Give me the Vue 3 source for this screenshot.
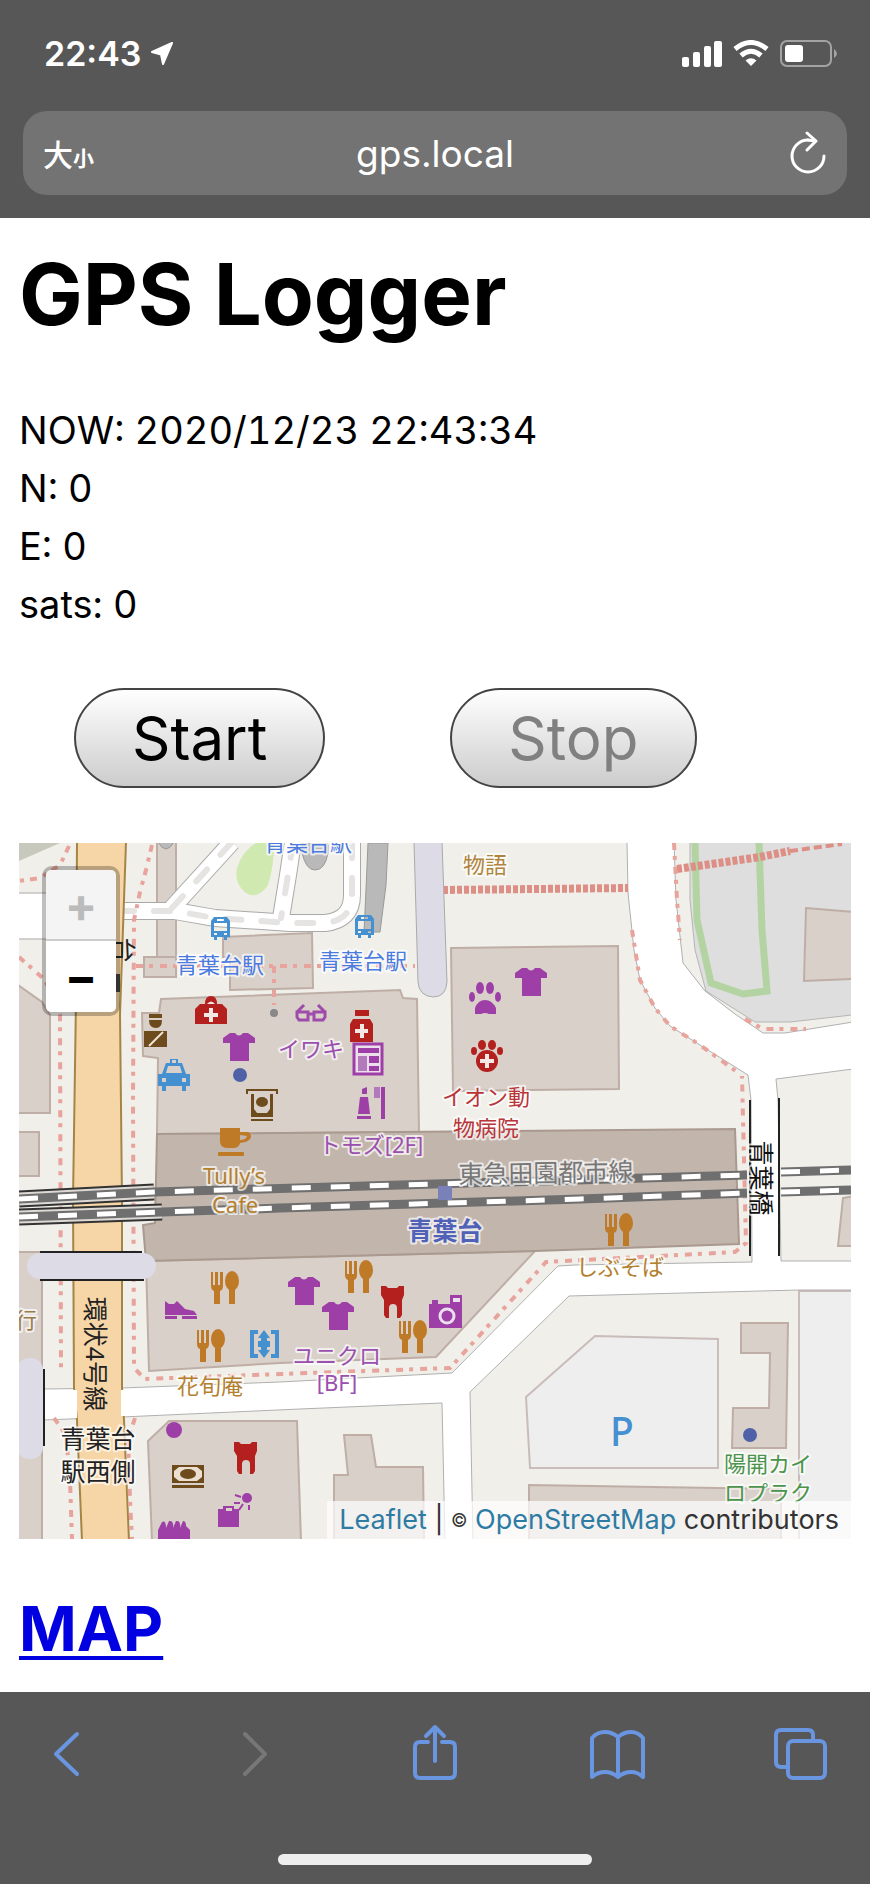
<template>
  <div class="phone">
    <header class="top-chrome">
      <div class="status-bar">
        <div class="clock">
          <span>22:43</span>
          <svg width="24" height="24" viewBox="0 0 24 24">
            <path d="M22 1 L2 10 L11 12.500 L13 22 Z" fill="#fff" stroke="#fff" stroke-width="2" stroke-linejoin="round" />
          </svg>
        </div>
        <svg width="156" height="28" viewBox="0 0 156 28">
          <g fill="#fff">
            <rect x="0" y="17" width="7" height="10" rx="2" />
            <rect x="11" y="12" width="7" height="15" rx="2" />
            <rect x="22" y="6" width="7" height="21" rx="2" />
            <rect x="32" y="1" width="8" height="26" rx="2" />
            <path d="M69 26 L63.500 20.500 Q69 16 74.500 20.500 Z" />
          </g>
          <g fill="none" stroke="#fff" stroke-width="5">
            <path d="M53 9 Q69 -4 85 9" />
            <path d="M59 15.500 Q69 7 79 15.500" />
          </g>
          <rect x="99" y="1" width="50" height="25" rx="6" fill="none" stroke="#a3a3a3" stroke-width="2" />
          <rect x="103" y="5" width="18" height="17" rx="3" fill="#fff" />
          <path d="M152 9 Q158 13.500 152 18 Z" fill="#a3a3a3" />
        </svg>
      </div>

      <div class="address-bar">
        <button type="button" class="text-size" aria-label="文字サイズ">
          <span class="big">大</span><span class="small">小</span>
        </button>
        <input v-model="address" class="address" type="text" aria-label="アドレス" />
        <button type="button" class="reload" aria-label="再読み込み">
          <svg width="38" height="44" viewBox="0 0 38 44">
            <path d="M19 9 A16 16 0 1 0 35 25" />
            <path d="M18 2 L27 10 L18 19" />
            <path d="M19 9 L26 10" />
          </svg>
        </button>
      </div>
    </header>

    <main class="page">
      <h1>GPS Logger</h1>

      <div class="readout">
        <div>NOW: {{ gps.now }}</div>
        <div>N: {{ gps.lat }}</div>
        <div>E: {{ gps.lng }}</div>
        <div>sats: {{ gps.sats }}</div>
      </div>

      <div class="controls">
        <button type="button" :disabled="logging" @click="logging = true">Start</button>
        <button type="button" :disabled="!logging" @click="logging = false">Stop</button>
      </div>

      <div class="map">
        <svg class="tiles" viewBox="19 843 832 696">
          <defs>
            <g id="tshirt">
              <path d="M0 5 L7 0 H12 Q16 5 20 0 H25 L32 5 V10 H26 V28 H7 V10 H0 Z" />
            </g>
            <g id="fork">
              <path d="M0 0 H2 V13 H4 V0 H7 V13 H9 V0 H12 V14 Q12 18 9 19 V32 H3 V19 Q0 18 0 14 Z" />
              <ellipse cx="21" cy="9" rx="7" ry="10" />
              <rect x="18" y="17" width="6" height="15" />
            </g>
            <g id="tooth">
              <path d="M0 0 H5 L7 2 H16 L18 0 H23 V9 L21 14 V29 L19 32 H16 V22 Q16 18 12 18 Q8 18 8 22 V32 H5 L3 29 V14 L0 9 Z" />
            </g>
            <g id="bus">
              <path
                fill-rule="evenodd"
                d="M3 0 H16 L19 4 V20 H16 V23 H13 V20 H6 V23 H3 V20 H0 V4 Z M6 2 V4 H13 V2 Z M3 6 V14 H16 V6 Z M3 16 V18 H6 V16 Z M13 16 V18 H16 V16 Z"
              />
            </g>
            <g id="firstaid">
              <path d="M10 8 Q10 0 16 0 Q22 0 22 8 H27 L32 13 V28 H0 V13 L5 8 Z" />
              <path fill="#f4e8e6" d="M12 8 Q16 3 20 8 Z M14 12 H18 V17 H23 V21 H18 V26 H14 V21 H9 V17 H14 Z" />
            </g>
            <g id="guard">
              <path d="M5 0 H18 V4 H5 Z M5 6 H18 Q18 14 12 14 Q5 14 5 6 Z M0 17 H23 V33 H0 Z" />
              <path d="M5 32 L19 18" stroke="#efe6d6" stroke-width="2" />
            </g>
            <g id="taxi">
              <path
                fill-rule="evenodd"
                d="M12 0 H20 V4 H24 L28 15 H32 V27 H28 V32 H24 V27 H8 V32 H4 V27 H0 V15 H4 L8 4 H12 Z M10 7 L8 14 H24 L22 7 Z M4 19 V23 H8 V19 Z M24 19 V23 H28 V19 Z M14 1 V4 H18 V1 Z"
              />
            </g>
            <g id="atm">
              <path
                fill-rule="evenodd"
                d="M0 0 H32 V5 H30 V2 H2 V5 H0 Z M5 5 H8 V20 L11 24 H21 L24 20 V5 H27 V28 H5 Z M5 30 H27 V32 H5 Z"
              />
              <ellipse cx="16" cy="13" rx="6" ry="5" />
            </g>
            <g id="cup">
              <path
                fill-rule="evenodd"
                d="M2 0 H22 V4 H29 Q33 4 33 9 Q32 14 22 15 Q21 20 15 20 H9 Q2 20 2 13 Z M22 7 V12 Q28 12 29 8 Z"
              />
              <rect x="0" y="24" width="26" height="4" rx="1" />
            </g>
            <g id="glasses" fill="none" stroke="#9e4bab" stroke-width="3">
              <path d="M2 9 H13 V17 H4 L2 14 Z M19 9 H30 V14 L28 17 H19 Z M13 11 H19 M2 9 L9 2 M30 9 L23 2" />
            </g>
            <g id="pharmacy">
              <path d="M5 0 H19 V6 H5 Z M3 9 H20 L23 14 V32 H0 V14 Z" />
              <path fill="#f4e8e6" d="M10 14 H14 V19 H18 V23 H14 V28 H10 V23 H5 V19 H10 Z" />
            </g>
            <g id="news">
              <rect x="1" y="1" width="28" height="30" fill="#eadfeb" stroke="#9e3fa8" stroke-width="3" />
              <path d="M5 5 H26 V10 H5 Z M16 13 H26 V20 H16 Z M16 23 H26 V28 H16 Z" />
              <rect x="5" y="13" width="9" height="15" fill="#b27aba" />
            </g>
            <g id="cosmetics">
              <path d="M5 2 L10 0 V7 H5 Z M3 10 H11 L13 27 H1 Z M0 29 H14 V32 H0 Z M24 0 H28 V32 H24 Z" />
              <rect x="17" y="0" width="6" height="11" fill="#b27aba" />
            </g>
            <g id="paw">
              <ellipse cx="11" cy="6" rx="4" ry="6" />
              <ellipse cx="21" cy="6" rx="4" ry="6" />
              <ellipse cx="3" cy="15" rx="3" ry="5" />
              <ellipse cx="29" cy="15" rx="3" ry="5" />
              <path d="M6 32 V26 Q9 18 16 18 Q23 18 27 26 V32 H20 Q16 30 12 32 Z" />
            </g>
            <g id="vet">
              <ellipse cx="11" cy="5" rx="4" ry="5" />
              <ellipse cx="21" cy="5" rx="4" ry="5" />
              <ellipse cx="3" cy="11" rx="3" ry="4" />
              <ellipse cx="29" cy="11" rx="3" ry="4" />
              <circle cx="16" cy="21" r="11" />
              <path fill="#f4e8e6" d="M14 14 H18 V19 H23 V23 H18 V28 H14 V23 H9 V19 H14 Z" />
            </g>
            <g id="shoe">
              <path d="M0 0 L4 3 H9 L12 0 L20 8 L29 10 L32 14 H0 Z M0 15 H12 V18 H0 Z M17 15 H32 V18 H17 Z" />
            </g>
            <g id="lift">
              <path d="M0 0 H8 V4 H4 V24 H8 V28 H0 Z M21 0 H29 V28 H21 V24 H25 V4 H21 Z M14 0 L20 8 H17 V11 H20 V17 H17 V20 H20 L14 28 L8 20 H11 V17 H8 V11 H11 V8 H8 Z" />
            </g>
            <g id="camera">
              <path d="M0 9 H3 V5 H9 V9 H21 V0 H33 V33 H0 Z" />
              <rect x="24" y="3" width="7" height="4" fill="#eadfeb" />
              <circle cx="18" cy="21" r="7" fill="none" stroke="#eadfeb" stroke-width="3" />
            </g>
            <g id="money">
              <path d="M0 0 H32 V18 H0 Z M0 20 H32 V23 H0 Z" />
              <path fill="#eadfd0" d="M7 2 H25 L30 6 V12 L25 16 H7 L2 12 V6 Z" />
              <ellipse cx="16" cy="9" rx="8" ry="5" />
            </g>
            <g id="bag">
              <path fill-rule="evenodd" d="M0 16 H5 V13 H16 V16 H21 V34 H0 Z M8 15 V18 H14 V15 Z" />
              <circle cx="29" cy="5" r="5" />
              <path d="M17 2 L23 4 M16 10 H22 M21 17 L25 11 M31 12 V17" fill="none" stroke="#9e3fa8" stroke-width="2" />
            </g>
            <g id="laundry">
              <path d="M0 19 V10 L4 2 Q8 0 8 8 L11 1 Q16 0 15 8 L18 1 Q23 0 22 8 L25 1 Q28 1 28 6 L32 10 V19 Z" />
            </g>
          </defs>

          <rect x="19" y="843" width="832" height="696" fill="#f0efea" />
          <path d="M19 843 H60 L19 861 Z" fill="#c6c9bb" />

          <!-- car park, pitch and other areas -->
          <path d="M690 843 V900 L695 950 L706 991 L755 1022 H790 L852 1015 V842 H690 Z" fill="#dedede" stroke="#b5b5b5" />
          <g fill="#eeeeee" stroke="#c9bcba" stroke-width="2">
            <path d="M526 1397 L595 1336 L718 1339 V1468 H530 Z" />
            <path d="M799 1291 H853 V1541 H799 Z" />
          </g>
          <path d="M237 868 Q243 850 256 843 H274 Q274 866 268 885 Q258 900 246 893 Q234 884 237 868 Z" fill="#cfe9b1" />
          <path d="M695 843 L697 920 L711 983 L743 994 L767 991 L762 930 L759 843" fill="none" stroke="#b3d4a2" stroke-width="7" />

          <!-- buildings -->
          <g fill="#d8d0c9" stroke="#bfaea6" stroke-width="2">
            <path v-for="d in buildings" :key="d" :d="d" />
          </g>
          <path d="M157 1134 L735 1129 L739 1244 L535 1251 L146 1261 L143 1225 L155 1223 Z" fill="#c2b5ab" stroke="#a9998f" stroke-width="2" />

          <!-- roads -->
          <g fill="none" stroke="#a9a9a9" stroke-width="18">
            <path v-for="d in lanes" :key="d" :d="d" />
          </g>
          <g fill="none" stroke="#fff" stroke-width="16">
            <path v-for="d in lanes" :key="d" :d="d" />
          </g>
          <g fill="none" stroke="#e6e3e3" stroke-width="6" stroke-linecap="round" stroke-dasharray="16 20">
            <path v-for="d in lanes" :key="d" :d="d" />
          </g>
          <g fill="#b9b9b9" stroke="#999">
            <path d="M302 843 V853 Q306 870 315 870 Q325 870 328 853 V843 Z" />
            <path d="M158 842 Q166 856 174 842 Z" />
            <path d="M368 843 H388 L386 885 L380 932 H364 L366 890 Z" />
          </g>
          <path
            fill="#fff"
            stroke="#b0b0b0"
            d="M627 842 L628 893 L634 950 L640 980 L655 1008 L670 1026 L700 1045 L748 1075 L751 1100 L752 1262 L575 1265 L558 1266 L452 1373 L280 1382 L122 1388 L43 1389 V1420 L122 1417 L300 1409 L442 1403 L445 1541 H473 L470 1392 L569 1296 L799 1290 L853 1290 V1261 H781 L778 1100 L776 1079 L853 1069 V1022 L785 1033 H763 L735 1014 L705 991 L683 963 L676 900 L674 842 Z"
          />
          <path d="M18 893 H76 V939 H18 Z" fill="#fff" stroke="#a9a9a9" />

          <path d="M77 842 L76 1000 L73 1200 L74 1388 L77 1420 L82 1541 H129 L124 1420 L122 1388 L122 1200 L120 1014 L126 842 Z" fill="#f6d6a6" stroke="#a58545" stroke-width="2" />
          <rect x="72" y="1390" width="5" height="28" fill="#fff" />
          <rect x="121" y="1390" width="5" height="26" fill="#fff" />

          <!-- footways -->
          <g fill="none" stroke="#e8a39c" stroke-width="4" stroke-dasharray="7 6 4 7">
            <path v-for="d in footways" :key="d" :d="d" />
          </g>
          <g fill="none" stroke="#dd8f86" stroke-width="8" stroke-dasharray="5 2">
            <path d="M443 890 L628 888" />
            <path d="M677 869 L760 857 L790 851" />
          </g>
          <path d="M790 851 L842 844" fill="none" stroke="#dd8f86" stroke-width="4" stroke-dasharray="8 4" />

          <!-- covered walkways -->
          <g fill="#dcdbe6">
            <path d="M414 842 H442 L447 982 Q446 997 433 997 Q419 996 418 982 Z" stroke="#aaa" />
            <rect x="27" y="1253" width="129" height="26" rx="13" />
            <rect x="17" y="1358" width="26" height="101" rx="12" />
          </g>
          <path
            d="M40 1252 H142 M40 1280 H144 M44 1369 V1446 M750 1100 V1256 M779 1098 V1256"
            stroke="#222"
            stroke-width="2"
          />

          <!-- railway -->
          <g fill="none" stroke-width="17" stroke="#333">
            <path d="M19 1199 L154 1192" />
            <path d="M19 1217 L162 1212" />
          </g>
          <g fill="none" stroke-width="13" stroke="#ddd9d4">
            <path d="M19 1199 L154 1192" />
            <path d="M19 1217 L162 1212" />
          </g>
          <g v-for="d in rails" :key="d" fill="none">
            <path :d="d" stroke="#6f6f6f" stroke-width="9" />
            <path :d="d" stroke="#fff" stroke-width="5" stroke-dasharray="19 20" />
          </g>
          <rect x="438" y="1186" width="14" height="14" fill="#7a80b8" />

          <circle cx="274" cy="1013" r="4" fill="#888" />
          <circle cx="240" cy="1075" r="7" fill="#4f62a8" />
          <circle cx="750" cy="1435" r="7" fill="#4f62a8" />
          <circle cx="174" cy="1430" r="8" fill="#9e3fa8" />
          <rect x="116" y="974" width="4" height="18" fill="#444" />

          <use
            v-for="(p, i) in pois"
            :key="i"
            :href="'#' + p.icon"
            :fill="p.color"
            :transform="`translate(${p.x} ${p.y})`"
          />

          <text
            v-for="(l, i) in labels"
            :key="'l' + i"
            class="label"
            :class="l.kind"
            :fill="l.color"
            :transform="`translate(${l.x} ${l.y}) rotate(${l.turn || 0})`"
          >{{ l.text }}</text>
        </svg>

        <div class="zoom">
          <button type="button" aria-label="Zoom in" disabled>+</button>
          <button type="button" aria-label="Zoom out">−</button>
        </div>

        <div class="attribution">
          <a href="#">Leaflet</a> | <small>©</small> <a href="#">OpenStreetMap</a> contributors
        </div>
      </div>

      <h2><a href="#">MAP</a></h2>
    </main>

    <footer class="bottom-chrome">
      <nav class="toolbar">
        <button type="button" aria-label="戻る">
          <svg viewBox="0 0 52 60"><path d="M37 11 L16 31 L37 51" /></svg>
        </button>
        <button type="button" aria-label="進む" disabled>
          <svg viewBox="0 0 52 60"><path d="M21 11 L41 31 L21 51" /></svg>
        </button>
        <button type="button" aria-label="共有">
          <svg viewBox="0 0 52 60">
            <path d="M21 19 H13 Q8 19 8 24 V50 Q8 55 13 55 H43 Q48 55 48 50 V24 Q48 19 43 19 H35" />
            <path d="M28 38 V4 M19 13 L28 4 L37 13" />
          </svg>
        </button>
        <button type="button" aria-label="ブックマーク">
          <svg viewBox="0 0 52 60">
            <path d="M27 14 Q21 9 14 9 Q6 9 1 15 V54 Q7 49 14 49 Q21 49 27 54 Q33 49 40 49 Q47 49 52 54 V15 Q47 9 40 9 Q33 9 27 14 V53" />
          </svg>
        </button>
        <button type="button" aria-label="タブ">
          <svg viewBox="0 0 52 60">
            <rect x="14" y="18" width="37" height="37" rx="5" />
            <path d="M13 44 H7 Q2 44 2 39 V12 Q2 7 7 7 H34 Q39 7 39 12 V17" />
          </svg>
        </button>
      </nav>
      <div class="home-indicator"></div>
    </footer>
  </div>
</template>

<script setup>
import { ref } from 'vue'

const address = ref('gps.local')
const logging = ref(false)

const gps = ref({
  now: '2020/12/23 22:43:34',
  lat: 0,
  lng: 0,
  sats: 0,
})

const buildings = [
  'M18 985 L42 1002 L50 1015 V1113 H18 Z',
  'M18 1132 H39 V1176 H18 Z',
  'M18 1252 H42 V1541 H18 Z',
  'M157 842 H176 V960 H157 Z',
  'M144 957 H176 V977 H144 Z',
  'M223 937 L312 933 L313 988 L230 990 V957 H223 Z',
  'M142 1013 H159 L161 999 L400 990 L403 998 L417 999 L419 1132 L157 1134 L158 1058 L143 1056 Z',
  'M451 948 L618 946 L619 1089 L453 1091 Z',
  'M146 1261 L535 1251 L436 1357 L280 1363 L149 1371 Z',
  'M148 1441 L169 1421 L297 1421 L301 1541 H152 Z',
  'M344 1435 H371 L376 1467 H423 L424 1541 H334 V1475 H348 Z',
  'M529 1485 L781 1489 V1541 H529 Z',
  'M741 1323 H788 L786 1448 H732 L733 1408 H769 L770 1353 H741 Z',
  'M806 908 L853 912 V979 L804 981 Z',
  'M843 1198 L853 1196 V1246 H838 Z',
]

const lanes = [
  'M118 911 H175 L215 918 L290 923 H325 Q352 920 352 895 V842',
  'M172 908 L232 842',
  'M293 842 L288 875 L281 918',
]

const footways = [
  'M69 846 L60 865 L40 878 L19 881',
  'M19 957 L45 980 L60 1015 L61 1372',
  'M152 845 L146 870 L140 892 L134 920 L133 1100 L134 1368 L145 1379 L280 1374 L450 1368 L546 1262 L735 1252 L746 1243 L742 1076',
  'M54 1418 L66 1435 L70 1480 L72 1539',
  'M135 1418 L128 1440 L130 1500 L132 1539',
  'M136 966 H415',
  'M274 966 V1005',
  'M674 843 L677 900 L680 940',
  'M632 930 L640 980 L655 1008 L670 1026 L700 1045 L740 1074',
  'M745 1019 L763 1029 L806 1029',
]

const rails = [
  'M19 1199 L154 1192 L435 1184 L747 1175',
  'M19 1217 L162 1212 L280 1208 L580 1199 L747 1193',
  'M781 1172 L851 1170',
  'M781 1192 L851 1190',
]

const purple = '#9e3fa8'
const red = '#b3201d'
const brown = '#6e4b1c'
const orange = '#bf7a28'
const blue = '#4490d0'

const pois = [
  { icon: 'bus', x: 211, y: 917, color: blue },
  { icon: 'bus', x: 355, y: 915, color: blue },
  { icon: 'firstaid', x: 195, y: 996, color: red },
  { icon: 'guard', x: 144, y: 1014, color: brown },
  { icon: 'taxi', x: 158, y: 1059, color: blue },
  { icon: 'tshirt', x: 223, y: 1033, color: purple },
  { icon: 'tshirt', x: 515, y: 968, color: purple },
  { icon: 'tshirt', x: 288, y: 1277, color: purple },
  { icon: 'tshirt', x: 322, y: 1302, color: purple },
  { icon: 'atm', x: 246, y: 1089, color: brown },
  { icon: 'cup', x: 218, y: 1128, color: orange },
  { icon: 'glasses', x: 295, y: 1003, color: purple },
  { icon: 'pharmacy', x: 350, y: 1010, color: red },
  { icon: 'news', x: 353, y: 1043, color: purple },
  { icon: 'cosmetics', x: 357, y: 1087, color: purple },
  { icon: 'paw', x: 469, y: 982, color: purple },
  { icon: 'vet', x: 471, y: 1040, color: red },
  { icon: 'fork', x: 211, y: 1272, color: orange },
  { icon: 'fork', x: 197, y: 1330, color: orange },
  { icon: 'fork', x: 345, y: 1261, color: orange },
  { icon: 'fork', x: 399, y: 1321, color: orange },
  { icon: 'fork', x: 605, y: 1214, color: orange },
  { icon: 'shoe', x: 165, y: 1301, color: purple },
  { icon: 'lift', x: 250, y: 1330, color: blue },
  { icon: 'tooth', x: 381, y: 1286, color: red },
  { icon: 'tooth', x: 234, y: 1442, color: red },
  { icon: 'camera', x: 429, y: 1295, color: purple },
  { icon: 'money', x: 172, y: 1465, color: brown },
  { icon: 'bag', x: 218, y: 1493, color: purple },
  { icon: 'laundry', x: 158, y: 1520, color: purple },
]

const labels = [
  { text: '青葉台駅', x: 308, y: 851, color: '#4a7be0' },
  { text: '青葉台駅', x: 220, y: 973, color: '#4a7be0' },
  { text: '青葉台駅', x: 363, y: 969, color: '#4a7be0' },
  { text: '物語', x: 485, y: 873, color: '#b0843c' },
  { text: 'イワキ', x: 311, y: 1057, color: '#9b4fae' },
  { text: 'トモズ[2F]', x: 371, y: 1153, color: '#9b4fae' },
  { text: 'イオン動', x: 486, y: 1105, color: '#b8353a' },
  { text: '物病院', x: 486, y: 1136, color: '#b8353a' },
  { text: '東急田園都市線', x: 546, y: 1182, color: '#777', kind: 'large', turn: -1 },
  { text: 'Tully’s', x: 234, y: 1184, color: '#b3802e' },
  { text: 'Cafe', x: 235, y: 1213, color: '#b3802e' },
  { text: '青葉台', x: 445, y: 1240, color: '#4f62b8', kind: 'station' },
  { text: 'しぶそば', x: 620, y: 1275, color: '#b3802e' },
  { text: '行', x: 26, y: 1328, color: '#9a7a4a' },
  { text: '台', x: 114, y: 950, color: '#222', kind: 'road', turn: 90 },
  { text: '環状4号線', x: 86, y: 1354, color: '#222', kind: 'road', turn: 90 },
  { text: '青葉橋', x: 752, y: 1178, color: '#111', kind: 'large', turn: 90 },
  { text: '青葉台', x: 98, y: 1448, color: '#222', kind: 'large' },
  { text: '駅西側', x: 98, y: 1481, color: '#222', kind: 'large' },
  { text: '花旬庵', x: 210, y: 1394, color: '#b3802e' },
  { text: 'ユニクロ', x: 337, y: 1364, color: '#9b4fae' },
  { text: '[BF]', x: 337, y: 1391, color: '#9b4fae' },
  { text: 'P', x: 622, y: 1446, color: '#4490d0', kind: 'parking' },
  { text: '陽開カイ', x: 768, y: 1472, color: '#4b944b' },
  { text: 'ロプラク', x: 768, y: 1501, color: '#4b944b' },
]
</script>

<style>
html,
body {
  margin: 0;
  background: #fff;
}
</style>

<style scoped>
.phone {
  display: flex;
  flex-direction: column;
  min-height: 100vh;
  font-family: Inter, 'Noto Sans CJK JP', sans-serif;
  color: #000;
}

button {
  font-family: inherit;
  cursor: pointer;
}

.top-chrome {
  padding: 0 23px 23px;
  background: #575757;
}

.status-bar {
  display: flex;
  align-items: center;
  justify-content: space-between;
  height: 107px;
  margin-bottom: 4px;
  padding: 0 9px 0 21px;
}

.clock {
  display: flex;
  align-items: center;
  gap: 9px;
  color: #fff;
  font-size: 34px;
  font-weight: 600;
}

.address-bar {
  display: grid;
  grid-template-columns: 90px 1fr 90px;
  align-items: center;
  height: 84px;
  border-radius: 24px;
  background: #737373;
}

.address-bar button {
  padding: 0;
  border: none;
  background: none;
  color: #fff;
}

.address-bar .text-size {
  display: flex;
  align-items: baseline;
  padding-left: 20px;
  font-weight: 500;
}

.text-size .big {
  font-size: 30px;
}

.text-size .small {
  font-size: 21px;
  font-weight: 700;
}

.address {
  min-width: 0;
  border: none;
  background: none;
  color: #fff;
  font-family: inherit;
  font-size: 37px;
  text-align: center;
  outline: none;
}

.reload svg {
  display: block;
  margin-left: 32px;
  fill: none;
  stroke: #fff;
  stroke-width: 3;
  stroke-linecap: round;
  stroke-linejoin: round;
}

.page {
  flex: 1;
  padding: 0 19px;
}

h1 {
  margin: 27px 0 56px;
  font-size: 85px;
  line-height: 100px;
}

.readout {
  font-size: 38px;
  font-weight: 400;
  font-variant-numeric: tabular-nums;
  line-height: 58px;
}

.controls {
  display: flex;
  gap: 125px;
  margin: 55px 0;
  padding-left: 55px;
}

.controls button {
  height: 100px;
  padding: 0 56px;
  border: 2px solid #444;
  border-radius: 50px;
  background: linear-gradient(#fff, #ccc);
  color: #000;
  font-size: 60px;
  font-weight: 400;
}

.controls button:disabled {
  color: #808080;
}

.map {
  position: relative;
}

.tiles {
  display: block;
  width: 100%;
}

.label {
  font-family: 'Noto Sans', 'Noto Sans CJK JP', sans-serif;
  font-size: 22px;
  text-anchor: middle;
  paint-order: stroke;
  stroke: rgba(255, 255, 255, 0.7);
  stroke-width: 4px;
  stroke-linejoin: round;
}

.label.large,
.label.road,
.label.station {
  font-size: 25px;
}

.label.road {
  stroke: none;
}

.label.station {
  font-weight: 700;
}

.label.parking {
  font-size: 39px;
  font-weight: 500;
  stroke: none;
}

.zoom {
  position: absolute;
  top: 23px;
  left: 23px;
  border: 4px solid rgba(0, 0, 0, 0.25);
  border-radius: 10px;
  background-clip: padding-box;
}

.zoom button {
  display: block;
  width: 70px;
  height: 71px;
  padding: 0;
  border: none;
  border-radius: 0 0 5px 5px;
  background: #fff;
  color: #000;
  font-size: 48px;
  font-weight: 700;
  line-height: 66px;
}

.zoom button:first-child {
  border-bottom: 2px solid #ccc;
  border-radius: 5px 5px 0 0;
}

.zoom button:disabled {
  background: #f4f4f4;
  color: #bbb;
}

.attribution {
  position: absolute;
  right: 0;
  bottom: 0;
  padding: 0 12px;
  background: rgba(255, 255, 255, 0.7);
  color: #333;
  font-size: 27px;
  font-weight: 400;
  line-height: 37px;
}

.attribution a {
  color: #2e7ba3;
  text-decoration: none;
}

.attribution small {
  font-size: 18px;
  vertical-align: 2px;
}

h2 {
  margin: 50px 0 22px;
  font-size: 62px;
  line-height: 80px;
}

h2 a {
  color: #0000e0;
  text-decoration-thickness: 4px;
  text-underline-offset: 5px;
}

.bottom-chrome {
  padding-bottom: 19px;
  background: #575757;
}

.toolbar {
  display: flex;
  justify-content: space-between;
  padding: 31px 44px 71px 40px;
}

.toolbar button {
  padding: 0;
  border: none;
  background: none;
  color: #6a95e0;
}

.toolbar button:disabled {
  color: #777;
}

.toolbar svg {
  display: block;
  width: 52px;
  height: 60px;
  overflow: visible;
  fill: none;
  stroke: currentColor;
  stroke-width: 4;
  stroke-linecap: round;
  stroke-linejoin: round;
}

.home-indicator {
  width: 36%;
  height: 11px;
  margin: 0 auto;
  border-radius: 6px;
  background: #eee;
}
</style>
